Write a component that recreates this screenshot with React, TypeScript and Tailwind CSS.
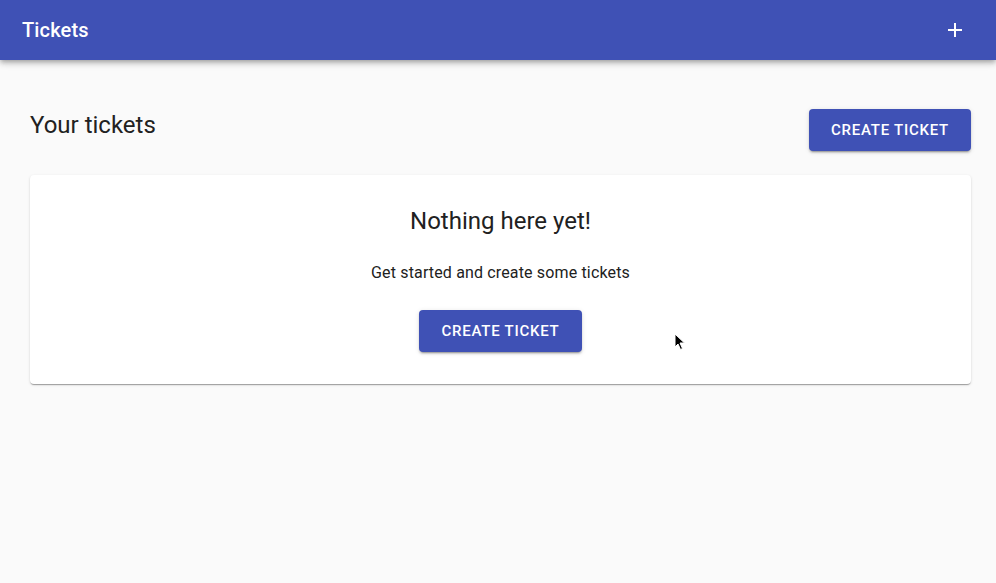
import React from 'react';

const shadowBtn =
  'shadow-[0px_3px_1px_-2px_rgba(0,0,0,0.2),0px_2px_2px_0px_rgba(0,0,0,0.14),0px_1px_5px_0px_rgba(0,0,0,0.12)]';

const CreateButton: React.FC = () => (
  <button
    className={`h-[42px] px-[22px] rounded-[4px] bg-[#3f51b5] text-white text-[15px] font-medium tracking-[0.76px] uppercase leading-[26px] ${shadowBtn}`}
  >
    Create ticket
  </button>
);

const AddIcon: React.FC = () => (
  <svg width="24" height="24" viewBox="0 0 24 24" fill="currentColor">
    <path d="M19 13h-6v6h-2v-6H5v-2h6V5h2v6h6v2z" />
  </svg>
);

export default function App() {
  return (
    <div
      className="min-h-[583px] bg-[#fafafa] text-[#212121] relative"
      style={{ fontFamily: 'Roboto, "Liberation Sans", sans-serif' }}
    >
      <header className="h-[60px] bg-[#3f51b5] text-white flex items-center justify-between pl-[22px] pr-[29px] shadow-[0px_2px_4px_-1px_rgba(0,0,0,0.2),0px_4px_5px_0px_rgba(0,0,0,0.14),0px_1px_10px_0px_rgba(0,0,0,0.12)] relative z-10">
        <h1 className="text-[20px] font-medium tracking-[0.15px]">Tickets</h1>
        <AddIcon />
      </header>

      <main className="px-[30px] pr-[25px] pt-[49px]">
        <div className="flex items-start justify-between">
          <h2 className="text-[24px] leading-[32px] font-normal">Your tickets</h2>
          <CreateButton />
        </div>

        <div className="mt-[24px] bg-white rounded-[4px] shadow-[0px_2px_1px_-1px_rgba(0,0,0,0.2),0px_1px_1px_0px_rgba(0,0,0,0.14),0px_1px_3px_0px_rgba(0,0,0,0.12)] flex flex-col items-center pt-[30px] pb-[32px]">
          <h3 className="text-[24px] leading-[32px] font-normal">Nothing here yet!</h3>
          <p className="mt-[24px] text-[16px] leading-[24px] tracking-[0.15px]">
            Get started and create some tickets
          </p>
          <div className="mt-[25px]">
            <CreateButton />
          </div>
        </div>
      </main>

      <svg
        className="absolute left-[674px] top-[333px]"
        width="12"
        height="18"
        viewBox="0 0 12 18"
      >
        <path d="M1 1 L1 14 L4 11 L6.5 16.5 L8.5 15.5 L6 10 L10.5 10 Z" fill="#000" stroke="#fff" strokeWidth="1" />
      </svg>
    </div>
  );
}
